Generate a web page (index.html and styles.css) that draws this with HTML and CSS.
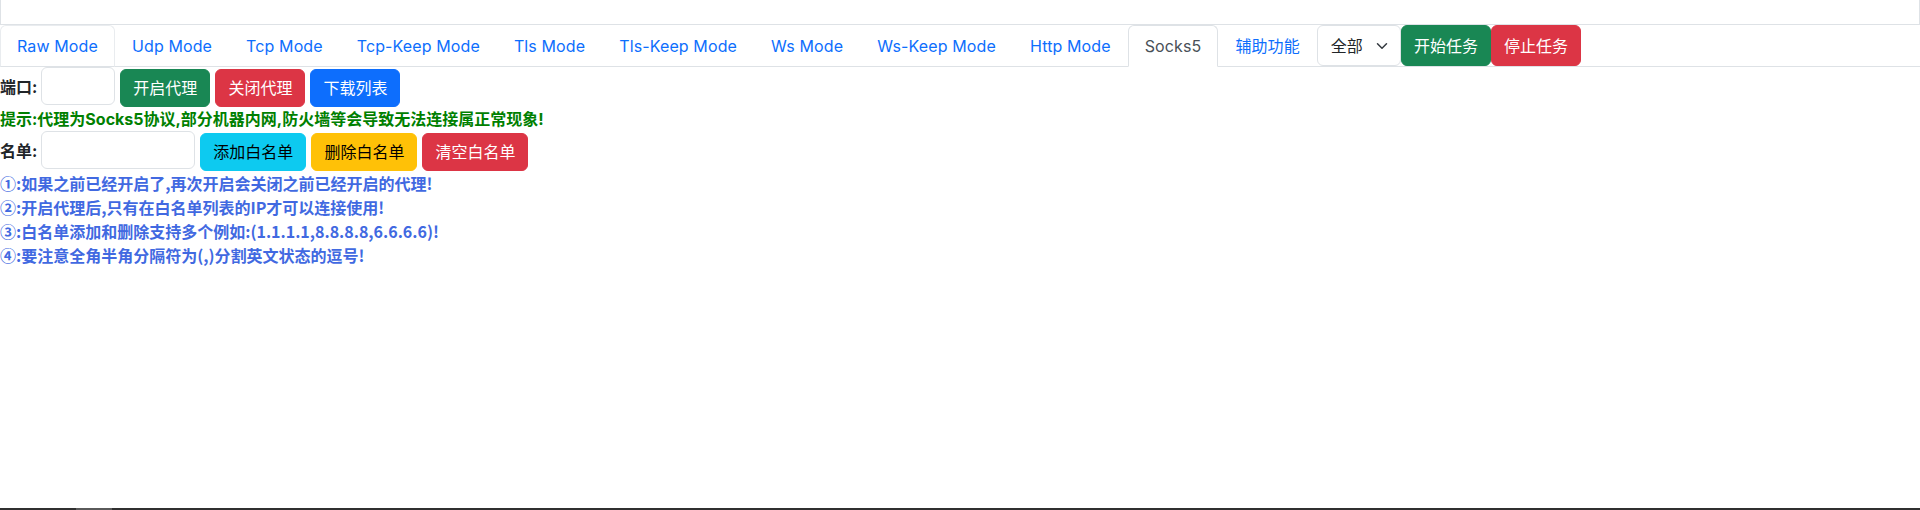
FILE: index.html
```html
<!DOCTYPE html>
<html lang="zh">
<head>
    <meta charset="UTF-8">
    <meta name="viewport" content="width=device-width, initial-scale=1.0">
    <title>Socks5</title>
    <link rel="stylesheet" href="styles.css">
</head>
<body>
    <div class="top-box"></div>

    <ul class="nav-tabs">
        <li><a class="nav-link hover">Raw Mode</a></li>
        <li><a class="nav-link">Udp Mode</a></li>
        <li><a class="nav-link">Tcp Mode</a></li>
        <li><a class="nav-link">Tcp-Keep Mode</a></li>
        <li><a class="nav-link">Tls Mode</a></li>
        <li><a class="nav-link">Tls-Keep Mode</a></li>
        <li><a class="nav-link">Ws Mode</a></li>
        <li><a class="nav-link">Ws-Keep Mode</a></li>
        <li><a class="nav-link">Http Mode</a></li>
        <li><a class="nav-link active">Socks5</a></li>
        <li><a class="nav-link">辅助功能</a></li>
        <li>
            <div class="select-box">
                <span>全部</span>
                <svg width="12" height="12" viewBox="0 0 16 16"><path d="M2 5l6 6 6-6" fill="none" stroke="#343a40" stroke-width="2" stroke-linecap="round" stroke-linejoin="round"/></svg>
            </div>
        </li>
        <li><button class="btn btn-success nav-btn">开始任务</button></li>
        <li><button class="btn btn-danger nav-btn">停止任务</button></li>
    </ul>

    <div class="panel">
        <div class="row">
            <b class="label">端口:</b>
            <input class="form-input port-input" type="text">
            <button class="btn btn-success">开启代理</button>
            <button class="btn btn-danger">关闭代理</button>
            <button class="btn btn-primary">下载列表</button>
        </div>
        <div class="tip">提示:代理为Socks5协议,部分机器内网,防火墙等会导致无法连接属正常现象!</div>
        <div class="row">
            <b class="label">名单:</b>
            <input class="form-input list-input" type="text">
            <button class="btn btn-info">添加白名单</button>
            <button class="btn btn-warning">删除白名单</button>
            <button class="btn btn-danger">清空白名单</button>
        </div>
        <div class="note">①:如果之前已经开启了,再次开启会关闭之前已经开启的代理!</div>
        <div class="note">②:开启代理后,只有在白名单列表的IP才可以连接使用!</div>
        <div class="note">③:白名单添加和删除支持多个例如:(1.1.1.1,8.8.8.8,6.6.6.6)!</div>
        <div class="note">④:要注意全角半角分隔符为(,)分割英文状态的逗号!</div>
    </div>

    <div class="scrollbar"><div class="scroll-thumb"></div></div>
</body>
</html>
```

FILE: styles.css
```css
body {
    margin: 0;
    min-height: 100vh;
    display: flex;
    flex-direction: column;
    font-family: Inter, "Noto Sans CJK SC", sans-serif;
    font-size: 16px;
    line-height: 1.5;
    color: #212529;
    background: #fff;
}

.top-box {
    height: 24px;
    border: 1px solid #dee2e6;
    border-top: none;
}

.nav-tabs {
    display: flex;
    margin: 0;
    padding: 0;
    list-style: none;
    border-bottom: 1px solid #dee2e6;
}

.nav-tabs li {
    display: flex;
}

.nav-link {
    display: block;
    padding: 8px 16px;
    margin-bottom: -1px;
    color: #0d6efd;
    letter-spacing: 0.12px;
    border: 1px solid transparent;
    border-top-left-radius: 6px;
    border-top-right-radius: 6px;
    white-space: nowrap;
    cursor: pointer;
}

.nav-link.hover {
    border-color: #e9ecef #e9ecef #dee2e6;
}

.nav-link.active {
    color: #495057;
    background: #fff;
    border-color: #dee2e6 #dee2e6 #fff;
}

.select-box {
    display: flex;
    align-items: center;
    gap: 13px;
    padding: 0 12px 0 13px;
    white-space: nowrap;
    border: 1px solid #dee2e6;
    border-radius: 6px;
    color: #212529;
}

.btn {
    display: inline-block;
    padding: 6px 12px;
    font-family: inherit;
    font-size: 16px;
    line-height: 1.5;
    white-space: nowrap;
    border: 1px solid transparent;
    border-radius: 6px;
    cursor: pointer;
    color: #fff;
}

.nav-btn {
    height: 41px;
}

.btn-success { background: #198754; border-color: #198754; }
.btn-danger { background: #dc3545; border-color: #dc3545; }
.btn-primary { background: #0d6efd; border-color: #0d6efd; }
.btn-info { background: #0dcaf0; border-color: #0dcaf0; color: #000; }
.btn-warning { background: #ffc107; border-color: #ffc107; color: #000; }

.row {
    display: flex;
    align-items: flex-start;
    gap: 5px;
    height: 40px;
}

.label {
    font-weight: 700;
    line-height: 40px;
    margin-right: -1px;
}

.form-input {
    height: 38px;
    padding: 6px 12px;
    box-sizing: border-box;
    font-family: inherit;
    font-size: 16px;
    border: 1px solid #dee2e6;
    border-radius: 6px;
}

.port-input { width: 74px; }
.list-input { width: 154px; }

.row .btn {
    margin-top: 2px;
}

.tip {
    color: green;
    font-weight: 700;
}

.note {
    color: royalblue;
    font-family: "Noto Sans CJK SC", Inter, sans-serif;
    font-weight: 700;
    line-height: 24px;
}

.scrollbar {
    margin-top: auto;
    height: 2px;
    background: #303030;
}

.scroll-thumb {
    width: 36px;
    height: 2px;
    margin-left: 76px;
    background: #5a5a5a;
}
```
